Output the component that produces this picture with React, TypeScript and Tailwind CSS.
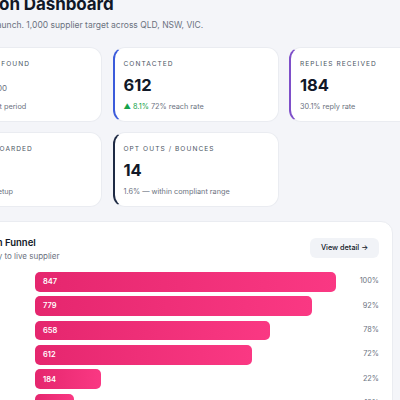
import React from "react";

const cards = [
  { label: "BUSINESSES FOUND", value: "847", suffix: "/ 1,000", sub: <span className="text-[#6b7280]">▲ 12.4% vs last period</span>, border: "border-l-[#e8286f]" },
  { label: "CONTACTED", value: "612", sub: <span><span className="text-[#16a34a]">▲ 8.1%</span> <span className="text-[#6b7280]">72% reach rate</span></span>, border: "border-l-[#3b5bdb]" },
  { label: "REPLIES RECEIVED", value: "184", sub: <span className="text-[#6b7280]">30.1% reply rate</span>, border: "border-l-[#7e4fc9]" },
  { label: "STORES ONBOARDED", value: "112", sub: <span className="text-[#6b7280]">13% pending setup</span>, border: "border-l-[#10b981]" },
  { label: "OPT OUTS / BOUNCES", value: "14", sub: <span className="text-[#6b7280]">1.6% — within compliant range</span>, border: "border-l-[#1e2a44]" },
];

const funnel = [
  { name: "Found", v: 847, p: 100 },
  { name: "Verified", v: 779, p: 92 },
  { name: "Qualified", v: 658, p: 78 },
  { name: "Contacted", v: 612, p: 72 },
  { name: "Replied", v: 184, p: 22 },
  { name: "Onboarded", v: 112, p: 13 },
];

export default function App() {
  return (
    <div className="w-[400px] h-[400px] overflow-hidden bg-[#f4f5f9] font-['Inter',sans-serif]">
      <div className="ml-[-64px] mt-[-6px] w-[520px]">
        <h1 className="text-[17px] leading-[20px] font-bold text-[#111827] tracking-[-0.1px]">Activation Dashboard</h1>
        <p className="mt-[6px] text-[8.5px] leading-[11px] text-[#6b7280]">Countdown to launch. 1,000 supplier target across QLD, NSW, VIC.</p>
        <div className="mt-[16px] grid grid-cols-[166px_166px_166px] gap-x-[10.5px] gap-y-[10px]">
          {cards.map((c) => (
            <div key={c.label} className={`h-[75px] rounded-[12px] bg-white border border-[#eaecf1] border-l-2 ${c.border} pl-[9px] pt-[12px]`}>
              <div className="text-[6.6px] leading-[8px] tracking-[0.16em] text-[#4b5563]">{c.label}</div>
              <div className="mt-[6.5px] flex items-baseline gap-[3px]">
                <span className="text-[16.5px] leading-[20px] font-bold text-[#111827]">{c.value}</span>
                {c.suffix && <span className="text-[8px] text-[#6b7280]">{c.suffix}</span>}
              </div>
              <div className="mt-[7.5px] text-[7.3px] leading-[10px]">{c.sub}</div>
            </div>
          ))}
        </div>
        <div className="mt-[14px] w-[457px] rounded-[12px] bg-white border border-[#eaecf1] px-[13px] pt-[14.5px] pb-[14px]">
          <div className="flex items-start justify-between">
            <div>
              <div className="text-[9.5px] leading-[12px] font-semibold text-[#111827]">Conversion Funnel</div>
              <div className="mt-[2.5px] text-[8px] leading-[10px] text-[#6b7280]">Full discovery to live supplier</div>
            </div>
            <button className="mt-[1.5px] h-[20px] w-[69px] rounded-[6px] bg-[#f1f3f7] text-[7.3px] font-medium text-[#111827]">View detail →</button>
          </div>
          <div className="mt-[11px] flex flex-col gap-[4.85px]">
            {funnel.map((f) => (
              <div key={f.name} className="flex items-center h-[19.5px]">
                <div className="w-[75px] text-[8px] text-[#374151]">{f.name}</div>
                <div className="ml-[10px] w-[301px]">
                  <div
                    className="h-[19.5px] rounded-[5px] bg-gradient-to-r from-[#e5266e] to-[#fa3883] flex items-center pl-[8px] text-[7.5px] font-semibold text-white"
                    style={{ width: `${f.p}%` }}
                  >
                    {f.v}
                  </div>
                </div>
                <div className="flex-1 text-right text-[7.3px] text-[#6b7280]">{f.p}%</div>
              </div>
            ))}
          </div>
        </div>
      </div>
    </div>
  );
}
